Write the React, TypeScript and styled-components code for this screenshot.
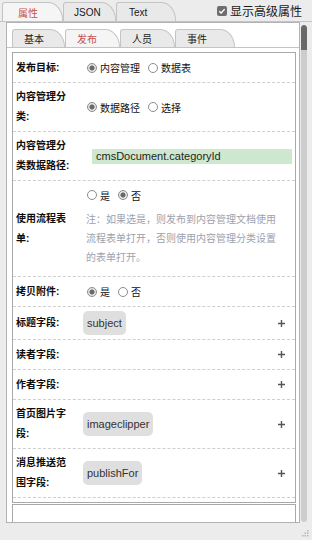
import React from 'react'
import styled, { createGlobalStyle } from 'styled-components'

const GlobalStyle = createGlobalStyle`
  html, body { margin: 0; padding: 0; }
  body {
    background: #ececec;
    font-family: 'Liberation Sans', 'Noto Sans CJK SC', sans-serif;
    font-size: 10px;
    color: #111;
  }
`

const Frame = styled.div`
  width: 312px;
  height: 540px;
  display: flex;
  flex-direction: column;
  overflow: hidden;
`

const TopBar = styled.div`
  box-sizing: border-box;
  height: 22px;
  display: flex;
  align-items: flex-end;
  padding-left: 2px;
  border-bottom: 1px solid #c4c4c4;
`

const Tab = styled.div<{ $active?: boolean; $w: number; $pad: number; $h: number }>`
  box-sizing: border-box;
  width: ${p => p.$w}px;
  height: ${p => p.$h}px;
  padding-left: ${p => p.$pad}px;
  display: flex;
  align-items: center;
  flex: none;
  background: ${p => (p.$active ? '#f5f5f5' : '#e9e9e9')};
  border: 1px solid #c4c4c4;
  border-bottom: none;
  border-radius: 3px 15px 0 0 / 3px 18px 0 0;
  color: ${p => (p.$active ? '#c9504e' : '#1a1a1a')};
  font-size: 10px;
`

const AdvToggle = styled.label`
  margin-left: auto;
  margin-right: 10px;
  align-self: center;
  display: flex;
  align-items: center;
  gap: 3px;
  font-size: 12px;
  color: #1a1a1a;
`

const CheckBox = styled.span`
  width: 10px;
  height: 10px;
  border-radius: 2px;
  background: #6e6e6e;
  display: flex;
  align-items: center;
  justify-content: center;
`

const Body = styled.div`
  display: flex;
  padding-left: 6px;
`

const Panel = styled.div`
  box-sizing: border-box;
  width: 294px;
  height: 501px;
  border: 1px solid #b2b2b2;
  background: #fff;
  padding: 6px 3px 0 5px;
  overflow: hidden;
`

const SubTabBar = styled.div`
  box-sizing: border-box;
  height: 19px;
  display: flex;
  align-items: flex-end;
  margin: 0 -3px 0 -5px;
  padding-left: 5px;
  border-bottom: 1px solid #c4c4c4;
`

const FormBox = styled.div<{ $clip?: boolean }>`
  margin-top: ${p => (p.$clip ? 1 : 4)}px;
  border: 1px solid #a9a9a9;
  padding-bottom: 4px;
  min-height: ${p => (p.$clip ? 40 : 0)}px;
`

const Row = styled.div`
  display: flex;
  align-items: center;
  padding: 4px 0;
  border-bottom: 1px dashed #cfcfcf;
`

const Label = styled.div`
  box-sizing: border-box;
  width: 70px;
  flex: none;
  padding: 0 12px 0 3px;
  font-weight: bold;
  line-height: 20px;
  color: #0d0d0d;
`

const Value = styled.div`
  flex: 1;
  min-height: 21px;
  display: flex;
  flex-direction: column;
  justify-content: center;
  align-items: flex-start;
`

const RadioGroup = styled.div`
  display: flex;
  align-items: center;
  height: 20px;
  padding-left: 4px;
`

const RadioItem = styled.span`
  display: inline-flex;
  align-items: center;
  margin-right: 8px;
  color: #111;
`

const RadioDot = styled.span<{ $on?: boolean }>`
  box-sizing: border-box;
  width: 10px;
  height: 10px;
  border-radius: 50%;
  margin-right: 3px;
  border: 1px solid #8c8c8c;
  background: ${p =>
    p.$on ? 'radial-gradient(circle, #6a6a6a 0 2.3px, #e4e4e4 2.8px)' : '#fff'};
`

const PathInput = styled.div`
  box-sizing: border-box;
  margin-left: 9px;
  width: 200px;
  height: 15px;
  padding-left: 4px;
  background: #cee8cf;
  font-family: 'Liberation Sans', sans-serif;
  font-size: 11px;
  line-height: 15px;
  color: #1e1e1e;
`

const Note = styled.div`
  width: 196px;
  margin: 5px 0 5px 3px;
  line-height: 19px;
  color: #9ba2ae;
`

const Chip = styled.span`
  height: 24px;
  padding: 0 4px;
  display: inline-flex;
  align-items: center;
  background: #dfdfdf;
  border-radius: 5px;
  font-family: 'Liberation Sans', sans-serif;
  font-size: 11px;
  color: #333;
`

const PlusBtn = styled.svg`
  flex: none;
  width: 7px;
  height: 7px;
  margin-right: 10px;
`

const Track = styled.div`
  width: 6px;
  height: 497px;
  margin: 3px 0 0 1px;
  background: #cdcdcd;
  border-radius: 3px;
  overflow: hidden;
`

const Thumb = styled.div`
  height: 25px;
  background: #696969;
  border-radius: 3px 3px 0 0;
`

const Footer = styled.div`
  flex: 1;
  display: flex;
  justify-content: flex-end;
  align-items: flex-end;
  padding: 0 3px 3px 0;
`

function Radios({ items, on }: { items: string[]; on: number }) {
  return (
    <RadioGroup>
      {items.map((t, i) => (
        <RadioItem key={t}>
          <RadioDot $on={i === on} />
          {t}
        </RadioItem>
      ))}
    </RadioGroup>
  )
}

function Plus() {
  return (
    <PlusBtn viewBox="0 0 7 7">
      <path d="M3.5 0v7M0 3.5h7" stroke="#555" strokeWidth="1.4" />
    </PlusBtn>
  )
}

const topTabs = [
  { t: '属性', w: 61, pad: 15, active: true },
  { t: 'JSON', w: 53, pad: 10 },
  { t: 'Text', w: 60, pad: 12 },
]

const subTabs = [
  { t: '基本', w: 53 },
  { t: '发布', w: 55, active: true },
  { t: '人员', w: 55 },
  { t: '事件', w: 60 },
]

export default function App() {
  return (
    <Frame>
      <GlobalStyle />
      <TopBar>
        {topTabs.map(({ t, w, pad, active }) => (
          <Tab key={t} $w={w} $pad={pad} $h={19} $active={active}>
            {t}
          </Tab>
        ))}
        <AdvToggle>
          <CheckBox>
            <svg width="8" height="8" viewBox="0 0 8 8">
              <path d="M1.3 4.2l1.8 1.8 3.6-3.9" fill="none" stroke="#fff" strokeWidth="1.4" />
            </svg>
          </CheckBox>
          显示高级属性
        </AdvToggle>
      </TopBar>

      <Body>
        <Panel>
          <SubTabBar>
            {subTabs.map(({ t, w, active }) => (
              <Tab key={t} $w={w} $pad={11} $h={18} $active={active}>
                {t}
              </Tab>
            ))}
          </SubTabBar>

          <FormBox>
            <Row>
              <Label>发布目标:</Label>
              <Value>
                <Radios items={['内容管理', '数据表']} on={0} />
              </Value>
            </Row>
            <Row>
              <Label>内容管理分类:</Label>
              <Value>
                <Radios items={['数据路径', '选择']} on={0} />
              </Value>
            </Row>
            <Row>
              <Label>内容管理分类数据路径:</Label>
              <Value>
                <PathInput>cmsDocument.categoryId</PathInput>
              </Value>
            </Row>
            <Row>
              <Label>使用流程表单:</Label>
              <Value>
                <Radios items={['是', '否']} on={1} />
                <Note>注：如果选是，则发布到内容管理文档使用流程表单打开，否则使用内容管理分类设置的表单打开。</Note>
              </Value>
            </Row>
            <Row>
              <Label>拷贝附件:</Label>
              <Value>
                <Radios items={['是', '否']} on={0} />
              </Value>
            </Row>
            <Row>
              <Label>标题字段:</Label>
              <Value>
                <Chip>subject</Chip>
              </Value>
              <Plus />
            </Row>
            <Row>
              <Label>读者字段:</Label>
              <Value />
              <Plus />
            </Row>
            <Row>
              <Label>作者字段:</Label>
              <Value />
              <Plus />
            </Row>
            <Row>
              <Label>首页图片字段:</Label>
              <Value>
                <Chip>imageclipper</Chip>
              </Value>
              <Plus />
            </Row>
            <Row>
              <Label>消息推送范围字段:</Label>
              <Value>
                <Chip>publishFor</Chip>
              </Value>
              <Plus />
            </Row>
          </FormBox>
          <FormBox $clip />
        </Panel>
        <Track>
          <Thumb />
        </Track>
      </Body>

      <Footer>
        <svg width="7" height="7" viewBox="0 0 7 7">
          <g fill="#b5b5b5">
            <rect x="5" y="0" width="1.5" height="1.5" />
            <rect x="2.5" y="2.5" width="1.5" height="1.5" />
            <rect x="5" y="2.5" width="1.5" height="1.5" />
            <rect x="0" y="5" width="1.5" height="1.5" />
            <rect x="2.5" y="5" width="1.5" height="1.5" />
            <rect x="5" y="5" width="1.5" height="1.5" />
          </g>
        </svg>
      </Footer>
    </Frame>
  )
}
